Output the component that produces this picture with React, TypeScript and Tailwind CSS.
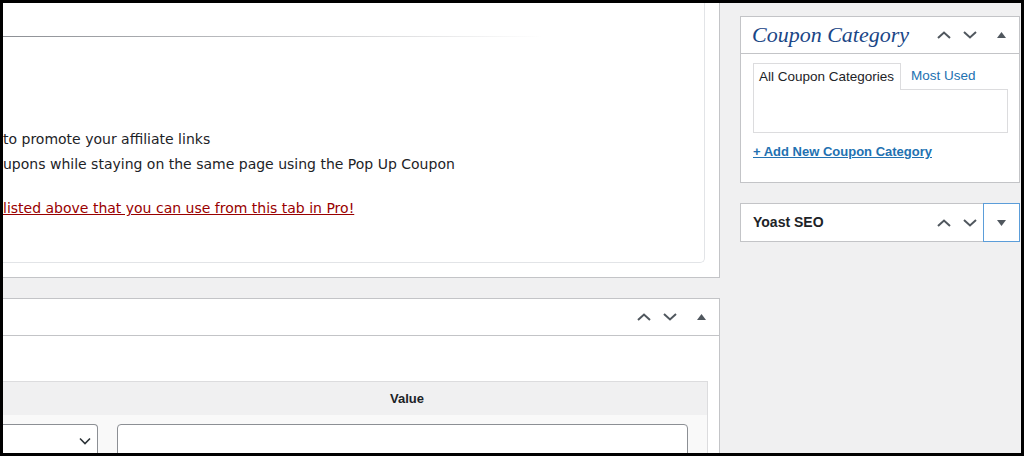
import React from 'react';

const sans = { fontFamily: '"Liberation Sans", Arial, sans-serif' };
const verdana = { fontFamily: '"DejaVu Sans", Verdana, sans-serif' };

function Chevron({ up }: { up?: boolean }) {
  return (
    <svg width="14" height="8" viewBox="0 0 14 8">
      <polyline
        points={up ? '1,7 7,1.5 13,7' : '1,1 7,6.5 13,1'}
        fill="none"
        stroke="#50575e"
        strokeWidth="2"
      />
    </svg>
  );
}

function Triangle({ up }: { up?: boolean }) {
  return (
    <svg width="9" height="6" viewBox="0 0 9 6">
      <polygon points={up ? '0,6 4.5,0 9,6' : '0,0 4.5,6 9,0'} fill="#50575e" />
    </svg>
  );
}

// order higher / lower / toggle buttons of a WP postbox header
function Handles({ up, focused }: { up?: boolean; focused?: boolean }) {
  return (
    <div className="flex h-full items-stretch">
      <div className="w-[26px] flex items-center justify-center">
        <Chevron up />
      </div>
      <div className="w-[26px] flex items-center justify-center">
        <Chevron />
      </div>
      {focused ? (
        <div className="w-[37px] -my-px -mr-px p-px bg-[#5b9dd9] flex">
          <div className="flex-1 bg-white flex items-center justify-center">
            <Triangle up={up} />
          </div>
        </div>
      ) : (
        <div className="w-[36px] flex items-center justify-center">
          <Triangle up={up} />
        </div>
      )}
    </div>
  );
}

export default function App() {
  return (
    <div
      className="w-[1024px] h-[456px] overflow-hidden border-[3px] border-black bg-[#f0f0f1] flex"
      style={sans}
    >
      {/* main column */}
      <div className="w-[717px] flex flex-col gap-[20px] shrink-0">
        <div className="h-[275px] shrink-0 bg-white border-r border-b border-[#c3c4c7] pr-[14px] pb-[14px]">
          <div className="h-full pt-[33px] border-r border-b border-[#e2e4e7] rounded-br-[5px]">
            <div className="h-px w-[540px] bg-gradient-to-r from-[#8c8f94] via-[#c3c4c7] to-transparent" />
            <div className="mt-[90px] text-[14px] text-[#1d2327]" style={verdana}>
              <p className="leading-[25px] whitespace-nowrap">to promote your affiliate links</p>
              <p className="leading-[25px] whitespace-nowrap">
                upons while staying on the same page using the Pop Up Coupon
              </p>
              <p className="mt-[19px] leading-[25px] whitespace-nowrap">
                <a className="text-[#990000] underline">
                  listed above that you can use from this tab in Pro!
                </a>
              </p>
            </div>
          </div>
        </div>

        <div className="flex-1 bg-white border-t border-r border-[#c3c4c7]">
          <div className="h-[37px] border-b border-[#c3c4c7] flex justify-end">
            <Handles up />
          </div>
          <div className="pt-[45px] pr-[11px]">
            <div className="border-t border-r border-[#dcdcde]">
              <div className="grid grid-cols-[104px_1fr] h-[33px] bg-[#f0f0f1] items-center text-[13px] font-bold text-[#1d2327]">
                <div />
                <div className="text-center">Value</div>
              </div>
              <div className="grid grid-cols-[104px_1fr] bg-[#f9f9f9] pt-[9px] h-[60px]">
                <div className="pr-[9px]">
                  <div className="h-[40px] border border-l-0 border-[#8c8f94] rounded-r-[4px] bg-white flex items-start justify-end pr-[6px] pt-[12px]">
                    <svg width="12" height="8" viewBox="0 0 12 8">
                      <polyline points="1,1.5 6,6.5 11,1.5" fill="none" stroke="#2c3338" strokeWidth="1.6" />
                    </svg>
                  </div>
                </div>
                <div className="pl-[10px] pr-[19px]">
                  <div className="h-[40px] border border-[#8c8f94] rounded-[4px] bg-white" />
                </div>
              </div>
            </div>
          </div>
        </div>
      </div>

      {/* sidebar */}
      <div className="ml-[20px] w-[280px] shrink-0 pt-[13px] flex flex-col gap-[20px]">
        <div className="bg-white border border-[#c3c4c7]">
          <div className="h-[37px] border-b border-[#c3c4c7] flex items-center justify-between">
            <h2
              className="pl-[11px] text-[22px] italic text-[#1a4686] leading-none"
              style={{ fontFamily: '"Liberation Serif", "Times New Roman", serif' }}
            >
              Coupon Category
            </h2>
            <Handles up />
          </div>
          <div className="pt-[9px] pl-[12px] pr-[11px] pb-[20px] text-[13px]">
            <div className="flex items-end">
              <div className="relative z-10 -mb-px w-[148px] h-[27px] border border-b-0 border-[#dcdcde] bg-white flex items-center pl-[5px] text-[13.5px] text-[#1d2327]">
                All Coupon Categories
              </div>
              <div className="h-[26px] flex items-center pl-[10px] text-[13.5px] text-[#2271b1]">Most Used</div>
            </div>
            <div className="h-[44px] border border-[#dcdcde] bg-white" />
            <div className="mt-[9px] leading-[20px]">
              <a className="text-[#2271b1] font-semibold underline">+ Add New Coupon Category</a>
            </div>
          </div>
        </div>

        <div className="h-[39px] bg-white border border-[#c3c4c7] flex items-center justify-between">
          <h2 className="pl-[12px] text-[14px] font-semibold text-[#1d2327]">Yoast SEO</h2>
          <Handles focused />
        </div>
      </div>
    </div>
  );
}
